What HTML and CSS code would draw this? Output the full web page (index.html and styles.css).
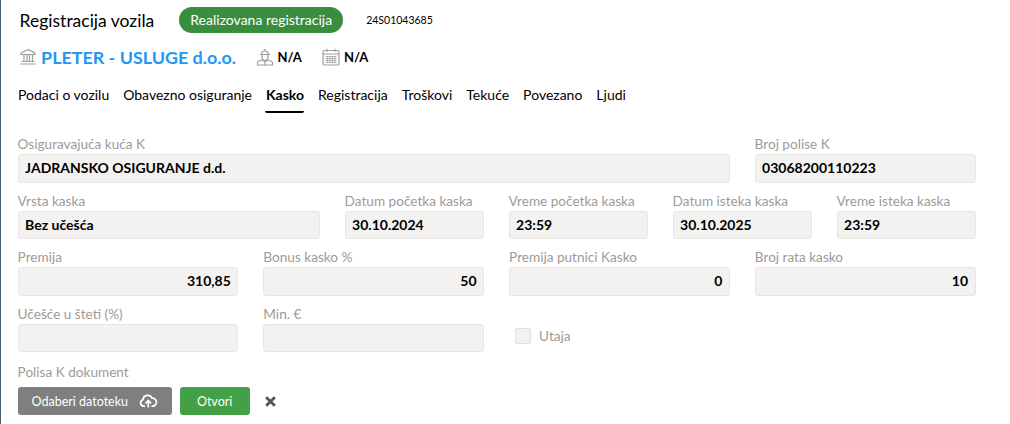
FILE: index.html
```html
<!DOCTYPE html>
<html lang="en">
<head>
  <meta charset="UTF-8" />
  <link rel="stylesheet" href="styles.css">
  <title>Registracija vozila</title>
</head>
<body>
<div class="container">
  <div class="title-row">
    <h1>Registracija vozila</h1>
    <span class="status">Realizovana registracija</span>
    <span class="reg-number">24S01043685</span>
  </div>

  <div class="client-row">
    <svg class="icon" viewBox="0 0 18 18"><path d="M9 1.500 2 5.200v1.300h14V5.200zM2.500 13.500h13M1.500 16h15M5 7v6M8 7v6M10.500 7v6M13.500 7v6" /></svg>
    <span class="client-name">PLETER - USLUGE d.o.o.</span>
    <svg class="icon" viewBox="0 0 18 18"><path d="M5.500 6.500a3.500 3.500 0 0 1 7 0M9 1v2M4 6.500h10M6 7v2.500a3 3 0 0 0 6 0V7M1.500 17v-2c0-1.500 2-2.500 5-3l2.500 2 2.500-2c3 .5 5 1.500 5 3v2zM9 14v3" /></svg>
    <span class="na">N/A</span>
    <svg class="icon icon-date" viewBox="0 0 18 18"><rect x="1" y="2.500" width="16" height="14.500" rx="1.500" /><path d="M1 6h16M5 .8v3M13 .8v3" /><path class="cal-grid" d="M3.500 8.500h11M3.500 10.500h11M3.500 12.500h11M3.500 14.500h11M5.500 8v7M8 8v7M10.500 8v7M13 8v7" /></svg>
    <span class="na">N/A</span>
  </div>

  <div class="tabs">
    <a>Podaci o vozilu</a>
    <a>Obavezno osiguranje</a>
    <a class="active">Kasko</a>
    <a>Registracija</a>
    <a>Troškovi</a>
    <a>Tekuće</a>
    <a>Povezano</a>
    <a>Ljudi</a>
  </div>

  <div class="form">
    <div class="row row-wide">
      <div class="form-group"><label>Osiguravajuća kuća K</label><div class="field">JADRANSKO OSIGURANJE d.d.</div></div>
      <div class="form-group"><label>Broj polise K</label><div class="field">03068200110223</div></div>
    </div>
    <div class="row row-five">
      <div class="form-group"><label>Vrsta kaska</label><div class="field">Bez učešća</div></div>
      <div class="form-group"><label>Datum početka kaska</label><div class="field">30.10.2024</div></div>
      <div class="form-group"><label>Vreme početka kaska</label><div class="field">23:59</div></div>
      <div class="form-group"><label>Datum isteka kaska</label><div class="field">30.10.2025</div></div>
      <div class="form-group"><label>Vreme isteka kaska</label><div class="field">23:59</div></div>
    </div>
    <div class="row row-four">
      <div class="form-group"><label>Premija</label><div class="field num">310,85</div></div>
      <div class="form-group"><label>Bonus kasko %</label><div class="field num">50</div></div>
      <div class="form-group"><label>Premija putnici Kasko</label><div class="field num">0</div></div>
      <div class="form-group"><label>Broj rata kasko</label><div class="field num">10</div></div>
    </div>
    <div class="row row-four">
      <div class="form-group"><label>Učešće u šteti (%)</label><div class="field"></div></div>
      <div class="form-group"><label>Min. €</label><div class="field"></div></div>
      <div class="check-group"><span class="checkbox"></span><label>Utaja</label></div>
    </div>
    <div class="doc-group">
      <label>Polisa K dokument</label>
      <div class="doc-actions">
        <button class="btn-file">Odaberi datoteku
          <svg viewBox="0 0 20 16"><path d="M6.500 13.500H5a3.500 3.500 0 0 1-.6-6.900A5 5 0 0 1 14 5 4.200 4.200 0 0 1 15 13.500h-1.500M10 15V8M7 10.500l3-3 3 3" /></svg>
        </button>
        <button class="btn-open">Otvori</button>
        <svg class="close" viewBox="0 0 12 12"><path d="M2 2l8 8M10 2l-8 8" /></svg>
      </div>
    </div>
  </div>
</div>
</body>
</html>
```

FILE: styles.css
```css
/* General body styling */
body {
  font-family: 'Lato', 'Open Sans', Arial, sans-serif;
  margin: 0;
  background-color: #fff;
  color: #000;
  font-size: 14px;
}

.container {
  height: 424px;
  box-sizing: border-box;
  border-left: 1px solid #44606f;
  padding: 7px 34.4px 0 16.6px;
  overflow: hidden;
}

/* Title */
.title-row {
  display: flex;
  align-items: center;
  height: 26px;
  padding-left: 2px;
}

h1 {
  margin: 0 25px 0 0;
  font-size: 17.5px;
  font-weight: 400;
}

.status {
  background-color: #388e3c;
  color: #fff;
  border-radius: 13px;
  padding: 0 11px;
  line-height: 26px;
  font-size: 14px;
}

.reg-number {
  margin-left: 23px;
  font-size: 10.5px;
}

/* Client */
.client-row {
  display: flex;
  align-items: center;
  height: 24px;
  margin-top: 12px;
  padding-left: 1.5px;
}

.icon {
  width: 18px;
  height: 18px;
  fill: none;
  stroke: #9e9e9e;
  stroke-width: 1.2;
}

.cal-grid {
  stroke-width: 0.7;
}

.client-name {
  margin: 0 19.5px 0 4px;
  color: #2196f3;
  font-size: 17.9px;
  font-weight: 700;
}

.na {
  margin-left: 4px;
  font-weight: 700;
  font-size: 13px;
}

.icon-date {
  margin-left: 20px;
}

/* Tabs */
.tabs {
  display: flex;
  gap: 14px;
  margin-top: 12px;
  height: 35px;
  padding-left: 0.4px;
}

.tabs a {
  line-height: 28px;
  font-size: 14px;
}

.tabs a.active {
  font-weight: 700;
  margin-left: -1px;
  padding-left: 1px;
  border-bottom: 2px solid #000;
  border-radius: 0 0 2px 2px;
  height: 30px;
}

/* Form */
.form {
  margin-top: 18px;
  color: #a09a96;
}

.row {
  display: grid;
  column-gap: 25px;
  margin-bottom: 8px;
}

.row-wide {
  grid-template-columns: 1fr 221px;
}

.row-five {
  grid-template-columns: 1fr repeat(4, 139px);
}

.row-four {
  grid-template-columns: repeat(4, 1fr);
}

label {
  display: block;
  font-size: 13.6px;
  line-height: 20px;
}

.field {
  height: 28.5px;
  line-height: 25px;
  box-sizing: border-box;
  padding: 0 6.5px;
  background-color: #f3f2f1;
  border: 1px solid #e8e6e4;
  border-radius: 3px;
  color: #000;
  font-weight: 700;
  font-size: 14px;
}

.num {
  text-align: right;
}

.check-group {
  display: flex;
  align-items: center;
  gap: 8px;
  padding: 17px 0 0 6px;
}

.checkbox {
  width: 16px;
  height: 16px;
  box-sizing: border-box;
  background-color: #f3f2f1;
  border: 1px solid #e1dfdd;
  border-radius: 2px;
}

/* Document buttons */
.doc-group {
  margin-top: 10px;
}

.doc-actions {
  display: flex;
  align-items: center;
  margin-top: 5px;
}

button {
  height: 28px;
  border: none;
  border-radius: 3px;
  color: #fff;
  font-family: inherit;
  font-size: 12.5px;
}

.btn-file {
  display: flex;
  align-items: center;
  gap: 11px;
  width: 154px;
  padding: 0 14px;
  background-color: #7f7f7f;
  white-space: nowrap;
}

.btn-file svg {
  width: 20px;
  height: 16px;
  fill: none;
  stroke: #fff;
  stroke-width: 1.8;
}

.btn-open {
  width: 70px;
  margin-left: 8px;
  background-color: #43a047;
}

.close {
  width: 13px;
  height: 13px;
  margin-left: 14px;
  fill: none;
  stroke: #555;
  stroke-width: 2.6;
}
```
